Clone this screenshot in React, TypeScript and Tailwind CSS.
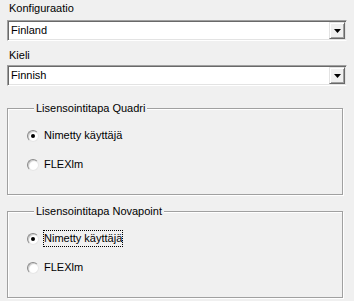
import React from 'react'

function Combo({ value }: { value: string }) {
  return (
    <div className="flex h-[21px] w-[340px] items-center bg-white border border-t-[#a0a0a0] border-l-[#a0a0a0] border-b-white border-r-[#f0f0f0] shadow-[inset_1px_1px_0_#696969,inset_-1px_-1px_0_#e3e3e3]">
      <span className="flex-1 pl-[3px] leading-[13px] text-black">{value}</span>
      <div className="mr-[1px] flex h-[17px] w-[16px] items-center justify-center bg-[#f0f0f0] border border-t-[#e3e3e3] border-l-[#e3e3e3] border-b-[#696969] border-r-[#696969] shadow-[inset_1px_1px_0_#fff,inset_-1px_-1px_0_#a0a0a0]">
        <svg width="7" height="4" viewBox="0 0 7 4">
          <path d="M0 0h7L3.5 4z" fill="#000" />
        </svg>
      </div>
    </div>
  )
}

function Radio({ label, checked, focused }: { label: string; checked?: boolean; focused?: boolean }) {
  return (
    <div className="flex h-[17px] items-center">
      <span className="flex h-[12px] w-[12px] items-center justify-center rounded-full bg-white border border-t-[#8a8a8a] border-l-[#8a8a8a] border-b-[#e6e6e6] border-r-[#e6e6e6] shadow-[inset_1px_1px_1px_#c8c8c8]">
        {checked && <span className="h-[4px] w-[4px] rounded-full bg-black" />}
      </span>
      <span
        className={`ml-[4px] leading-[15px] border border-dotted ${focused ? 'border-black' : 'border-transparent'}`}
      >
        {label}
      </span>
    </div>
  )
}

function Group({ title, focused, className }: { title: string; focused?: boolean; className?: string }) {
  return (
    <fieldset
      className={`ml-[7px] w-[336px] border border-[#a0a0a0] shadow-[1px_1px_0_#fff,inset_1px_1px_0_#fff] pl-[19px] ${className ?? ''}`}
    >
      <legend className="ml-[7px] bg-[#f0f0f0] px-[2px] leading-[13px]">{title}</legend>
      <div className="flex flex-col gap-[12px] pt-[12px] pb-[21px]">
        <Radio label="Nimetty käyttäjä" checked focused={focused} />
        <Radio label="FLEXlm" />
      </div>
    </fieldset>
  )
}

export default function App() {
  return (
    <div
      className="h-[301px] w-[354px] overflow-hidden bg-[#f0f0f0] text-[11px] text-black"
      style={{ fontFamily: '"Liberation Sans", Arial, sans-serif' }}
    >
      <div className="pl-[7px]">
        <div className="h-[20px] pl-[2px] pt-[2px] leading-[13px]">Konfiguraatio</div>
        <Combo value="Finland" />
        <div className="h-[24px] pl-[2px] pt-[8px] leading-[13px]">Kieli</div>
        <Combo value="Finnish" />
      </div>
      <Group title="Lisensointitapa Quadri" className="mt-[16px]" />
      <Group title="Lisensointitapa Novapoint" focused className="mt-[10px]" />
    </div>
  )
}
